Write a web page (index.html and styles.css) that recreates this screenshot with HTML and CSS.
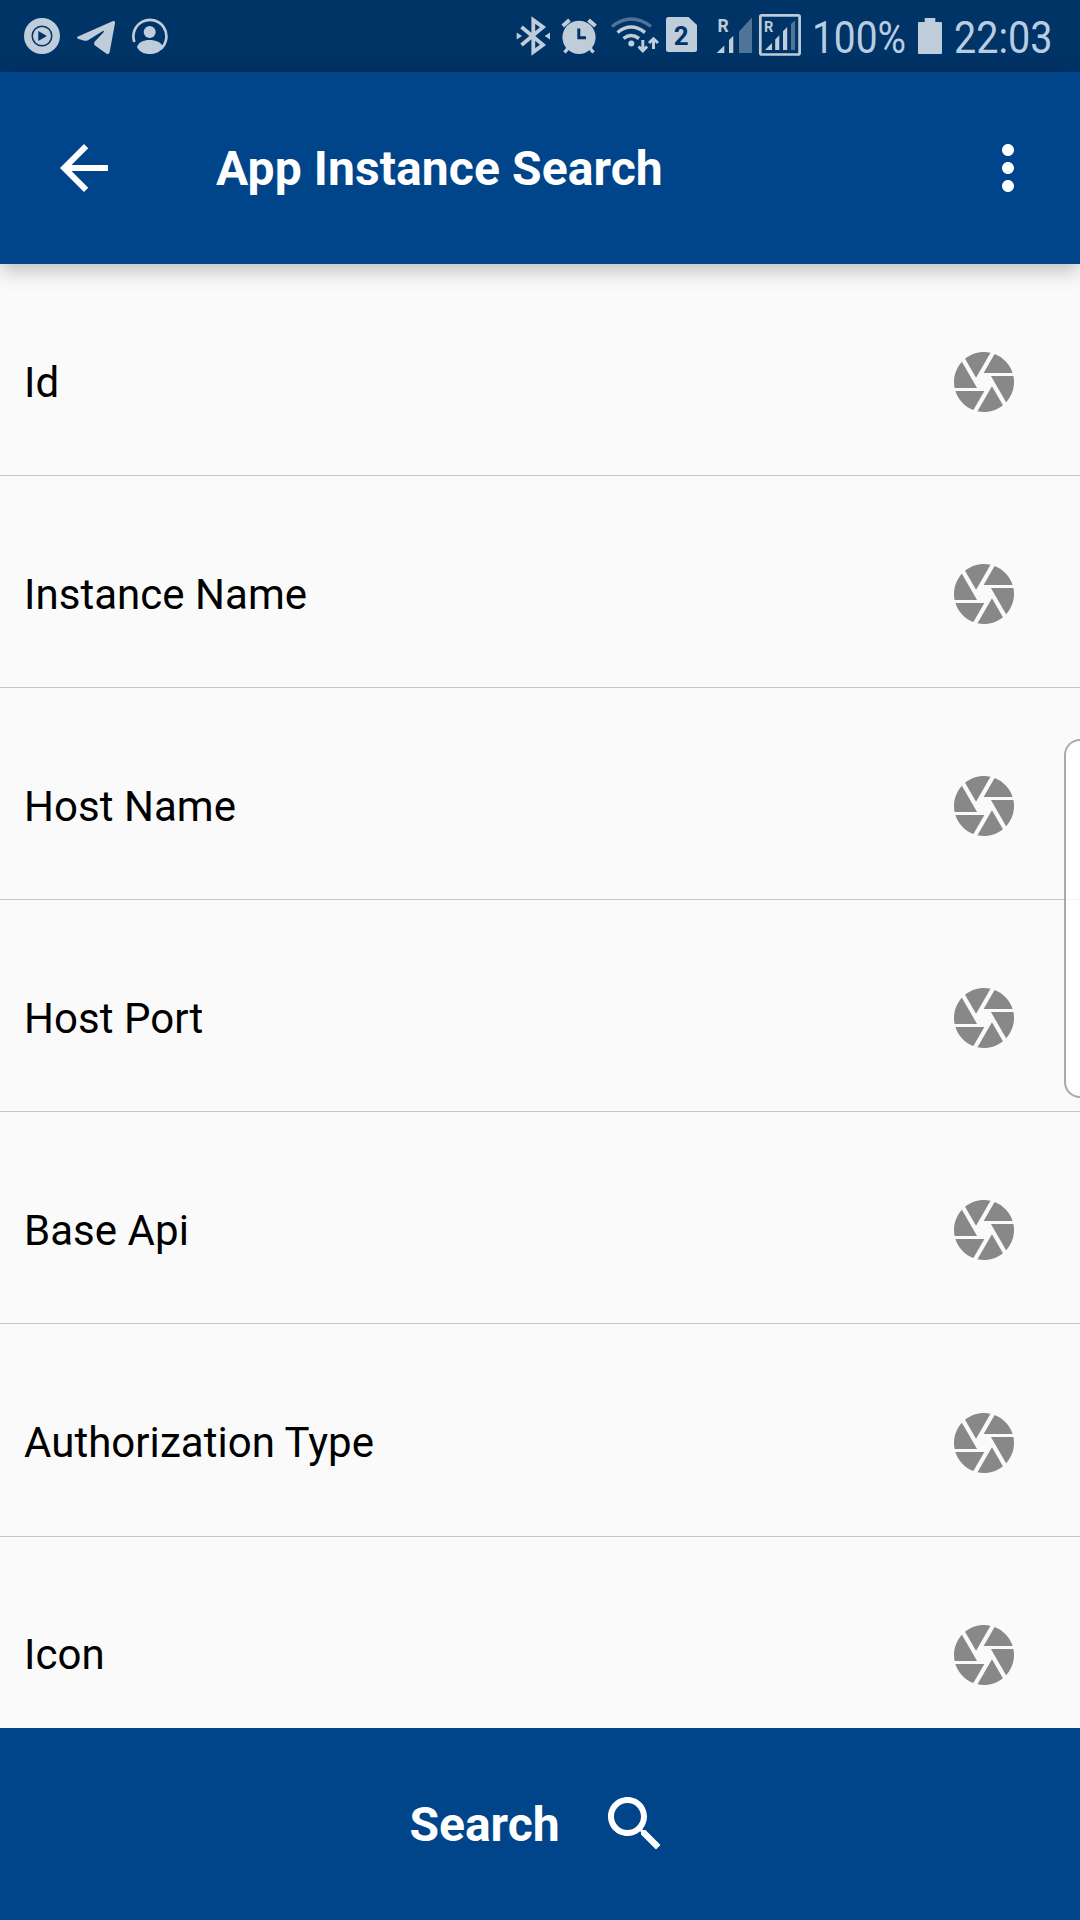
FILE: index.html
```
<!DOCTYPE html>
<html lang="en">
<head>
<meta charset="utf-8">
<title>App Instance Search</title>
<link rel="stylesheet" href="styles.css">
</head>
<body>
<svg class="defs" width="0" height="0">
  <symbol id="aperture" viewBox="0 0 24 24"><path d="M9.4 10.5l4.77-8.26C13.47 2.09 12.75 2 12 2c-2.4 0-4.6.85-6.32 2.25l3.66 6.35.06-.1zM21.54 9c-.92-2.92-3.15-5.26-6-6.34L11.88 9h9.66zm.26 1h-7.49l.29.5 4.76 8.25C21 16.97 22 14.61 22 12c0-.69-.07-1.35-.2-2zM8.54 12l-3.9-6.75C3.01 7.03 2 9.39 2 12c0 .69.07 1.35.2 2h7.49l-1.15-2zm-6.08 3c.92 2.92 3.15 5.26 6 6.34L12.12 15H2.46zm11.27 0l-3.9 6.76c.7.15 1.42.24 2.17.24 2.4 0 4.6-.85 6.32-2.25l-3.66-6.35-.93 1.6z"/></symbol>
</svg>
<div class="screen">
  <div class="status">
    <div class="status-group">
      <svg width="38" height="72" viewBox="23 0 38 72"><circle cx="42" cy="36" r="18" class="fg"/><circle cx="42" cy="36" r="9.8" class="line-bg" stroke-width="1.5"/><path class="bg" d="M38.3 31v10l8.6-5z"/></svg>
      <svg width="40" height="72" viewBox="76 0 40 72"><path class="fg" d="M78 36.6 112.5 21.2Q115.5 20.2 115 23L109.7 52Q109 55 106.200 53.400L95 45.500Q93 43.700 94.600 41.800L103.800 32Q104.500 30.400 102.500 31.200L88 40.300Q86 41.300 83.500 40.500L78 38.800Q76 37.700 78 36.600Z"/></svg>
      <svg width="38" height="72" viewBox="131 0 38 72"><path class="line-fg" stroke-width="2.700" d="M134.400 42A16.500 16.500 0 1 1 160.500 49"/><circle cx="149.700" cy="32" r="6" class="fg"/><path class="fg" d="M137 47.500C138 42 143.500 40 149.500 40S162 42 163 48C159 52.500 155 54 149.500 54S140 52 137 47.500Z"/></svg>
    </div>
    <div class="status-group status-right">
      <svg width="36" height="72" viewBox="515 0 36 72"><path class="line-fg" stroke-width="3.800" d="M521.500 27 543 44.800 533.300 52V20L543 27.200 521.500 45"/><path class="fg" d="M516.700 32.500 522 36l-5.300 3.500zM550 32.500 544.700 36l5.300 3.500z"/></svg>
      <svg width="36" height="72" viewBox="561 0 36 72"><circle cx="579" cy="37.300" r="16.600" class="fg"/><path class="line-bg" stroke-width="3" d="M578.800 28.500V37.700H586"/><path class="line-fg" stroke-width="4" d="M562.700 26 569.500 20M588.500 20 595.500 26"/><path class="line-fg" stroke-width="3.500" d="M569 47 564.500 52.500M589 47 593.500 52.500"/></svg>
      <svg width="50" height="72" viewBox="610 0 50 72"><path class="line-dim" stroke-width="3.200" d="M612 26.500Q631 11.500 651 26.500"/><g class="line-fg" stroke-width="3.500"><path d="M617.500 32.500Q631 21.500 645 32.500M623.500 38.500Q631 32.500 639 38.500"/><path d="M642.800 40V50.500M638.500 46.500l4.300 4.300 4.300-4.300M653.500 49V39M649 43l4.500-4.300 4.500 4.300" stroke-width="3"/></g><circle cx="631.300" cy="43.600" r="3" class="fg"/></svg>
      <svg width="33" height="72" viewBox="665 0 33 72"><path class="fg" d="M668 17h20.500l8.500 8v24.500q0 2.500-2.500 2.500H668.500q-2.500 0-2.500-2.500v-30q0-2.500 2-2.500z"/><text x="681.300" y="45" class="sim">2</text></svg>
      <svg width="37" height="72" viewBox="716 0 37 72"><text x="717.500" y="32.300" class="roam">R</text><path class="fg" d="M716.700 53 724.300 45.500V53zM729 53V40l4.300-4.300V53z"/><path class="dim" d="M739 53V31.500L752 17.500V53z"/></svg>
      <svg width="44" height="72" viewBox="758 0 44 72"><rect x="760.300" y="15.300" width="39.300" height="39.200" rx="1.500" class="line-fg" stroke-width="2.700"/><text x="764" y="32" class="roam roam-small">R</text><path class="fg" d="M765 50 772 43V50zM775.200 50V39.500l4.100-4.200V50zM783 50V31.200l4.200-4.200V50z"/><path class="dim" d="M791 50V24l4-3.500V50z"/></svg>
      <svg width="102" height="72" viewBox="808 0 102 72"><text x="812" y="53" textLength="94" lengthAdjust="spacingAndGlyphs" class="status-text">100%</text></svg>
      <svg width="26" height="72" viewBox="917 0 26 72"><path class="fg" d="M919 22h5.700v-4h10.600v4h5.700q1 0 1 1v30q0 1-1 1h-22q-1 0-1-1v-30q0-1 1-1z"/></svg>
      <svg width="110" height="72" viewBox="948 0 110 72"><text x="954" y="53" textLength="98.500" lengthAdjust="spacingAndGlyphs" class="status-text">22:03</text></svg>
    </div>
  </div>
  <header class="appbar">
    <svg class="back" width="72" height="72" viewBox="0 0 24 24"><path d="M20 11H7.830l5.590-5.590L12 4l-8 8 8 8 1.410-1.410L7.830 13H20v-2z"/></svg>
    <h1>App Instance Search</h1>
    <svg class="more" width="72" height="72" viewBox="0 0 24 24"><path d="M12 8c1.100 0 2-.9 2-2s-.9-2-2-2-2 .9-2 2 .9 2 2 2zm0 2c-1.100 0-2 .9-2 2s.9 2 2 2 2-.9 2-2-.9-2-2-2zm0 6c-1.100 0-2 .9-2 2s.9 2 2 2 2-.9 2-2-.9-2-2-2z"/></svg>
  </header>
  <main class="list">
    <div class="row"><span>Id</span><svg><use href="#aperture"/></svg></div>
    <div class="row"><span>Instance Name</span><svg><use href="#aperture"/></svg></div>
    <div class="row"><span>Host Name</span><svg><use href="#aperture"/></svg></div>
    <div class="row"><span>Host Port</span><svg><use href="#aperture"/></svg></div>
    <div class="row"><span>Base Api</span><svg><use href="#aperture"/></svg></div>
    <div class="row row-tall"><span>Authorization Type</span><svg><use href="#aperture"/></svg></div>
    <div class="row row-last"><span>Icon</span><svg><use href="#aperture"/></svg></div>
  </main>
  <footer class="search">
    <span>Search</span>
    <svg width="72" height="72" viewBox="0 0 24 24"><path d="M15.500 14h-.79l-.28-.27C15.410 12.590 16 11.110 16 9.500 16 5.910 13.090 3 9.500 3S3 5.910 3 9.500 5.910 16 9.500 16c1.610 0 3.090-.59 4.230-1.570l.27.28v.79l5 4.990L20.490 19l-4.990-5zm-6 0C7.010 14 5 11.990 5 9.500S7.010 5 9.500 5 14 7.010 14 9.500 11.990 14 9.500 14z"/></svg>
  </footer>
  <div class="edge-handle"></div>
</div>
</body>
</html>
```
FILE: styles.css
```
* { box-sizing: border-box; }
body { margin: 0; font-family: Roboto, sans-serif; }
.defs { position: absolute; }
.screen {
  position: relative;
  display: flex;
  flex-direction: column;
  width: 1080px;
  height: 1920px;
  overflow: hidden;
  background: #fafafa;
}
svg { display: block; flex: none; }

.status {
  display: flex;
  justify-content: space-between;
  flex: none;
  height: 72px;
  padding: 0 22px 0 23px;
  background: #003366;
}
.status-group { display: flex; gap: 15px; }
.status-right { gap: 0; }
.status-right svg:nth-child(2) { margin-left: 10px; }
.status-right svg:nth-child(3) { margin-left: 13px; }
.status-right svg:nth-child(4) { margin-left: 5px; }
.status-right svg:nth-child(5) { margin-left: 18px; }
.status-right svg:nth-child(6) { margin-left: 5px; }
.status-right svg:nth-child(7) { margin-left: 6px; }
.status-right svg:nth-child(8) { margin-left: 7px; }
.status-right svg:nth-child(9) { margin-left: 5px; }
.fg { fill: #bfccd9; }
.bg { fill: #003366; }
.dim { fill: #507398; }
.line-fg { fill: none; stroke: #bfccd9; }
.line-bg { fill: none; stroke: #003366; }
.line-dim { fill: none; stroke: #507398; }
.sim { fill: #003366; font-size: 26px; font-weight: 700; text-anchor: middle; }
.roam { fill: #bfccd9; font-size: 17.5px; font-weight: 700; }
.roam-small { font-size: 14.5px; }
.status-text { fill: #b9cde2; font-size: 45px; }

.appbar {
  position: relative;
  display: flex;
  align-items: center;
  flex: none;
  height: 192px;
  padding: 0 36px 0 48px;
  color: #fff;
  background: #00458a;
  box-shadow: 0 6px 20px rgba(0, 0, 0, .25);
}
.appbar svg, .search svg { fill: #fff; }
.appbar h1 {
  flex: 1;
  margin: 0 0 0 96px;
  padding-top: 2px;
  font-size: 48px;
  line-height: 64px;
  font-weight: 700;
  letter-spacing: .1px;
}

.list { flex: 1; min-height: 0; overflow: hidden; }
.row {
  display: flex;
  align-items: center;
  justify-content: space-between;
  height: 212px;
  padding: 24px 60px 0 24px;
  border-bottom: 1px solid #c1c8cc;
  color: #000;
  font-size: 42px;
  letter-spacing: .04px;
}
.row span { padding-top: 2px; }
.row svg { width: 72px; height: 72px; fill: #888; }
.row-tall { height: 213px; padding-bottom: 1px; }
.row-tall svg { margin-top: 2px; }
.row-last span { padding-top: 0; }

.search {
  display: flex;
  align-items: center;
  justify-content: center;
  gap: 39px;
  flex: none;
  height: 192px;
  color: #fff;
  background: #00458a;
  font-size: 48px;
  font-weight: 700;
}

.edge-handle {
  position: absolute;
  top: 739px;
  right: 0;
  width: 16px;
  height: 359px;
  border: 2px solid #aaa;
  border-right: 0;
  border-radius: 18px 0 0 18px;
  background: rgba(255, 255, 255, .8);
}
```
